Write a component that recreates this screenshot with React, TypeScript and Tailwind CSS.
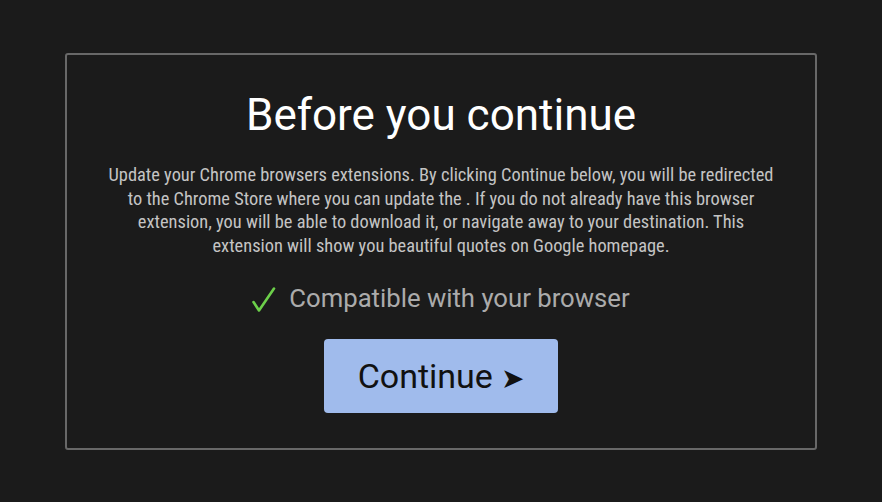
export default function App() {
  return (
    <div className="min-h-screen w-full bg-[#1b1b1b] pt-[53px] font-['Roboto',sans-serif]">
      <div className="mx-auto w-[752px] rounded-[3px] border-2 border-[#686868] px-10 pt-[30px] pb-[35px] text-center">
        <h1 className="text-[44px] leading-[60px] text-white">Before you continue</h1>

        <p className="-mx-6 mt-[18px] text-[18.4px] leading-[23.5px] text-[#c4c4c4] [font-stretch:condensed]">
          Update your Chrome browsers extensions. By clicking Continue below, you will be redirected
          <br />
          to the Chrome Store where you can update the . If you do not already have this browser
          <br />
          extension, you will be able to download it, or navigate away to your destination. This
          <br />
          extension will show you beautiful quotes on Google homepage.
        </p>

        <div className="mt-[25px] flex items-center justify-center gap-[13px] text-[25.7px] leading-[32px] text-[#ababab]">
          <svg width="24" height="26" viewBox="0 0 24 26" className="mt-[4px]">
            <path d="M1.5 15 L7 23.5 L22 1.5" fill="none" stroke="#6ccf4a" strokeWidth="2.6" strokeLinecap="round" strokeLinejoin="round" />
          </svg>
          <span>Compatible with your browser</span>
        </div>

        <button className="mt-[25px] h-[74px] w-[234px] rounded-[4px] bg-[#a0bbec] text-[34px] text-[#111]">
          Continue <span className="text-[28px]">➤</span>
        </button>
      </div>
    </div>
  )
}
